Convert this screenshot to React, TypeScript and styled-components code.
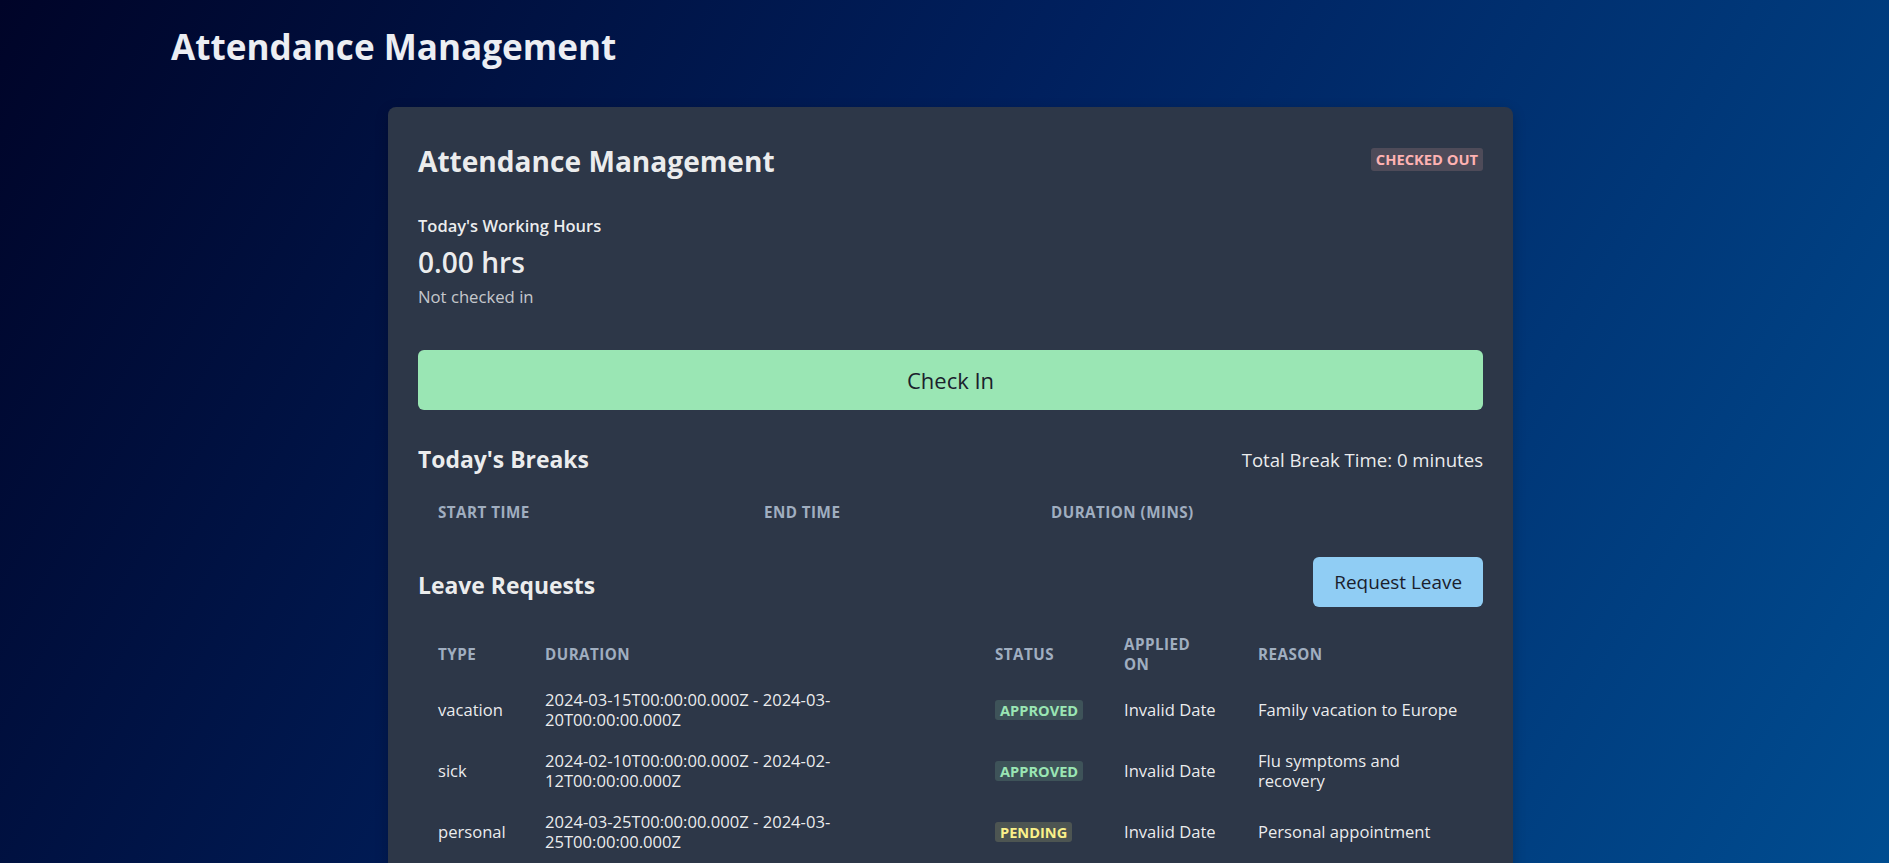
import React from 'react';
import styled, { createGlobalStyle } from 'styled-components';

/* --------------------------------- styles --------------------------------- */

const FONT = `"Open Sans", "Noto Sans", "Liberation Sans", sans-serif`;

const GlobalStyle = createGlobalStyle`
  html, body {
    margin: 0;
    padding: 0;
  }

  body {
    min-height: 100vh;
    overflow: hidden;
    background: linear-gradient(120deg, #000428 0%, #00205e 45%, #004e92 100%);
    font-family: ${FONT};
    color: rgba(255, 255, 255, 0.92);
    -webkit-font-smoothing: antialiased;
  }
`;

const Page = styled.div`
  padding: 24px 0 40px;
`;

const PageTitle = styled.h1`
  margin: 0 0 0 171px;
  font-size: 35.1px;
  line-height: 44px;
  font-weight: 700;
  color: #eceef3;
`;

const Card = styled.section`
  width: 1125px;
  margin: 39px 0 0 388px;
  box-sizing: border-box;
  padding: 36px 30px 30px;
  background: #2d3748;
  border-radius: 8px;
  box-shadow: 0 4px 14px rgba(0, 0, 0, 0.2);
`;

const CardHeader = styled.header`
  display: flex;
  justify-content: space-between;
  align-items: center;
`;

const CardTitle = styled.h2`
  margin: 0;
  font-size: 28.1px;
  line-height: 36px;
  font-weight: 700;
`;

const tones = {
  red: { fg: '#feb2b2', bg: 'rgba(254, 178, 178, 0.16)' },
  green: { fg: '#9ae6b4', bg: 'rgba(154, 230, 180, 0.16)' },
  yellow: { fg: '#faf089', bg: 'rgba(250, 240, 137, 0.16)' },
};

type Tone = keyof typeof tones;

const Badge = styled.span<{ $tone: Tone; $large?: boolean }>`
  display: inline-block;
  margin-bottom: ${(p) => (p.$large ? '3px' : '0')};
  padding: 0 5px;
  border-radius: 3px;
  font-size: ${(p) => (p.$large ? '14.7px' : '14.6px')};
  line-height: ${(p) => (p.$large ? '23px' : '20px')};
  font-weight: 700;
  text-transform: uppercase;
  white-space: nowrap;
  color: ${(p) => tones[p.$tone].fg};
  background: ${(p) => tones[p.$tone].bg};
`;

const Stat = styled.div`
  margin-top: 35px;
  display: flex;
  flex-direction: column;
  gap: 5.5px;
`;

const StatLabel = styled.div`
  font-size: 16.5px;
  line-height: 24px;
  font-weight: 600;
`;

const StatNumber = styled.div`
  font-size: 28.1px;
  line-height: 36px;
  font-weight: 600;
`;

const StatHelp = styled.div`
  font-size: 16.7px;
  line-height: 24px;
  opacity: 0.8;
`;

const ActionButton = styled.button<{ $bg: string; $full?: boolean }>`
  display: inline-flex;
  align-items: center;
  justify-content: center;
  box-sizing: border-box;
  width: ${(p) => (p.$full ? '100%' : 'auto')};
  height: ${(p) => (p.$full ? '60px' : '50px')};
  padding: 0 21px;
  border: none;
  border-radius: 6px;
  background: ${(p) => p.$bg};
  color: #1a202c;
  font-family: ${FONT};
  font-size: ${(p) => (p.$full ? '22px' : '18.9px')};
  font-weight: 500;
  cursor: pointer;
`;

const CheckInRow = styled.div`
  margin-top: 41px;
`;

const SectionHeader = styled.div<{ $gap: number }>`
  margin-top: ${(p) => p.$gap}px;
  display: flex;
  justify-content: space-between;
  align-items: center;
`;

const SectionTitle = styled.h3<{ $drop?: number }>`
  margin: 0;
  padding-top: ${(p) => p.$drop ?? 0}px;
  font-size: 22.9px;
  line-height: 30px;
  font-weight: 700;
`;

const SectionMeta = styled.span`
  font-size: 18.6px;
  line-height: 24px;
`;

const Table = styled.table`
  width: 100%;
  margin-top: 22px;
  table-layout: fixed;
  border-collapse: collapse;
`;

const Th = styled.th`
  padding: 5px 20px;
  text-align: left;
  vertical-align: middle;
  font-size: 15.2px;
  line-height: 20px;
  font-weight: 700;
  letter-spacing: 0.03em;
  text-transform: uppercase;
  color: #a0aec0;
`;

const Td = styled.td`
  padding: 10.5px 20px;
  vertical-align: middle;
  font-size: 16.6px;
  line-height: 20px;
`;

const Wrap = styled.span<{ $max: number }>`
  display: block;
  max-width: ${(p) => p.$max}px;
`;

/* ---------------------------------- data ---------------------------------- */

type Leave = {
  type: string;
  from: string;
  to: string;
  status: 'approved' | 'pending';
  reason: string;
};

const leaves: Leave[] = [
  {
    type: 'vacation',
    from: '2024-03-15T00:00:00.000Z',
    to: '2024-03-20T00:00:00.000Z',
    status: 'approved',
    reason: 'Family vacation to Europe',
  },
  {
    type: 'sick',
    from: '2024-02-10T00:00:00.000Z',
    to: '2024-02-12T00:00:00.000Z',
    status: 'approved',
    reason: 'Flu symptoms and recovery',
  },
  {
    type: 'personal',
    from: '2024-03-25T00:00:00.000Z',
    to: '2024-03-25T00:00:00.000Z',
    status: 'pending',
    reason: 'Personal appointment',
  },
];

/* -------------------------------- component ------------------------------- */

const App = () => {
  return (
    <>
      <GlobalStyle />
      <Page>
        <PageTitle>Attendance Management</PageTitle>

        <Card>
          <CardHeader>
            <CardTitle>Attendance Management</CardTitle>
            <Badge $tone="red" $large>
              Checked Out
            </Badge>
          </CardHeader>

          <Stat>
            <StatLabel>Today's Working Hours</StatLabel>
            <StatNumber>0.00 hrs</StatNumber>
            <StatHelp>Not checked in</StatHelp>
          </Stat>

          <CheckInRow>
            <ActionButton $bg="#9ae6b4" $full>
              Check In
            </ActionButton>
          </CheckInRow>

          <SectionHeader $gap={35}>
            <SectionTitle>Today's Breaks</SectionTitle>
            <SectionMeta>Total Break Time: 0 minutes</SectionMeta>
          </SectionHeader>

          <Table>
            <colgroup>
              <col style={{ width: 326 }} />
              <col style={{ width: 287 }} />
              <col />
            </colgroup>
            <thead>
              <tr>
                <Th>Start Time</Th>
                <Th>End Time</Th>
                <Th>Duration (mins)</Th>
              </tr>
            </thead>
            <tbody />
          </Table>

          <SectionHeader $gap={30}>
            <SectionTitle $drop={7}>Leave Requests</SectionTitle>
            <ActionButton $bg="#90cdf4">Request Leave</ActionButton>
          </SectionHeader>

          <Table>
            <colgroup>
              <col style={{ width: 107 }} />
              <col style={{ width: 450 }} />
              <col style={{ width: 129 }} />
              <col style={{ width: 134 }} />
              <col />
            </colgroup>
            <thead>
              <tr>
                <Th>Type</Th>
                <Th>Duration</Th>
                <Th>Status</Th>
                <Th>
                  <Wrap $max={80}>Applied On</Wrap>
                </Th>
                <Th>Reason</Th>
              </tr>
            </thead>
            <tbody>
              {leaves.map((l) => (
                <tr key={l.from}>
                  <Td>{l.type}</Td>
                  <Td>
                    <Wrap $max={310}>
                      {l.from} - {l.to}
                    </Wrap>
                  </Td>
                  <Td>
                    <Badge $tone={l.status === 'approved' ? 'green' : 'yellow'}>{l.status}</Badge>
                  </Td>
                  <Td>Invalid Date</Td>
                  <Td>{l.reason}</Td>
                </tr>
              ))}
            </tbody>
          </Table>
        </Card>
      </Page>
    </>
  );
};

export default App;
